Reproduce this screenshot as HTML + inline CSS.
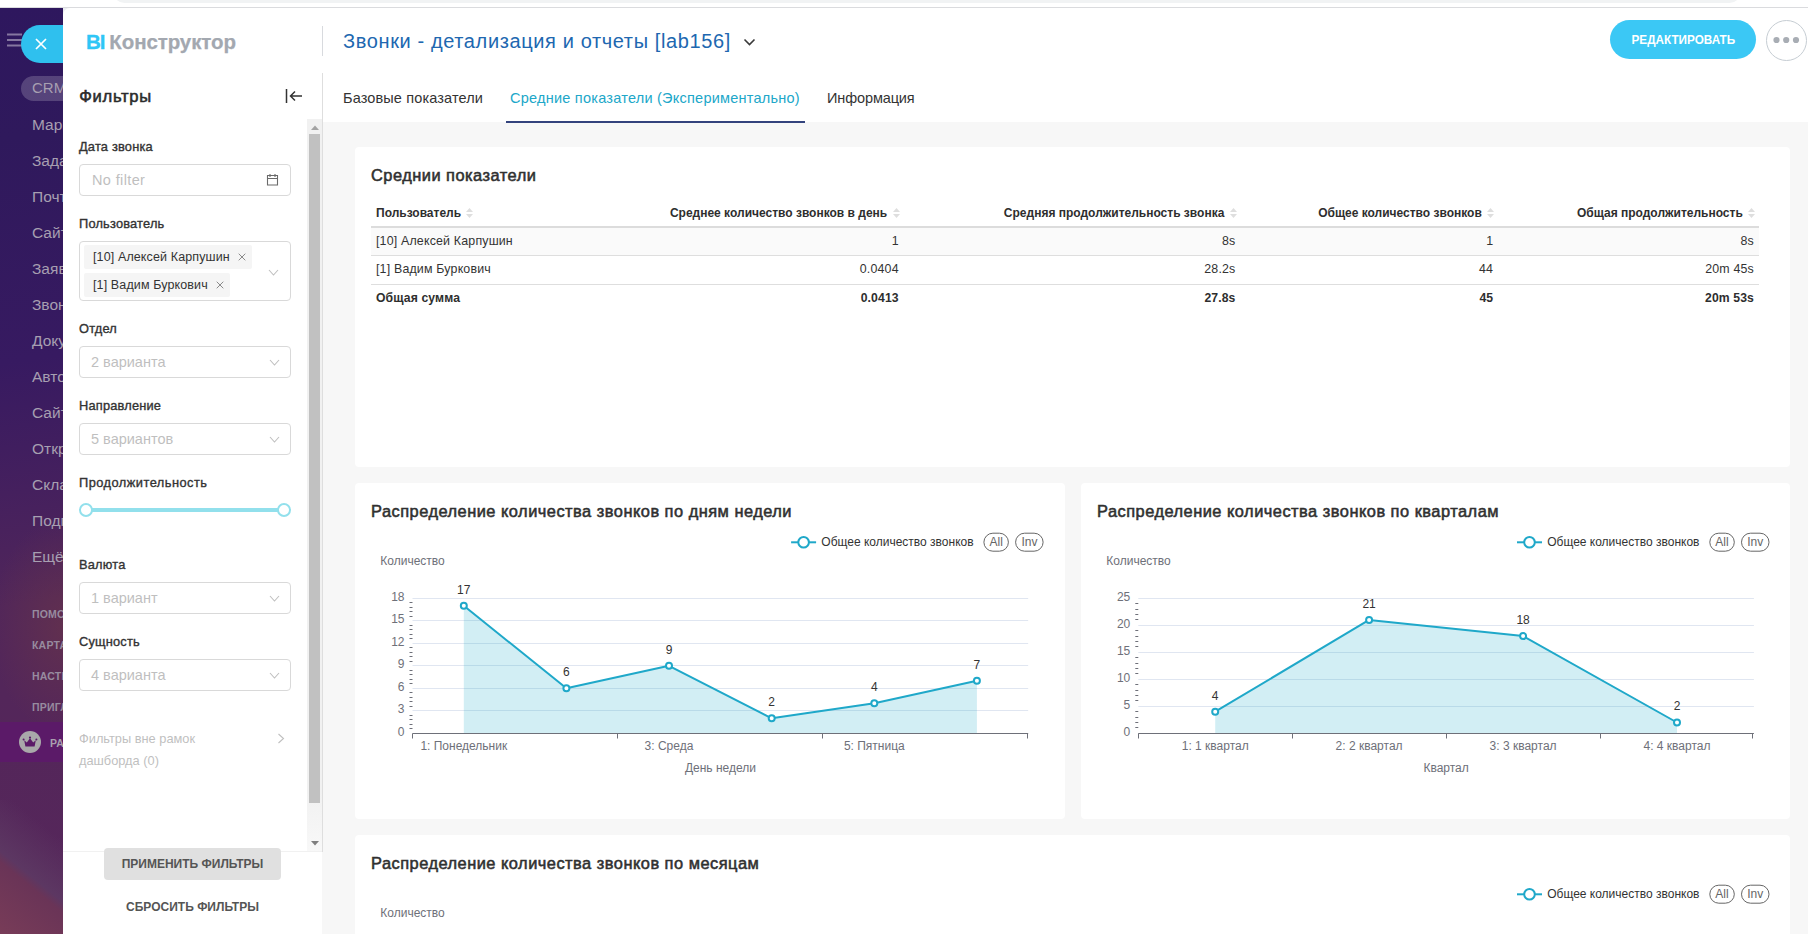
<!DOCTYPE html>
<html lang="ru">
<head>
<meta charset="utf-8">
<title>BI Конструктор</title>
<style>
*{box-sizing:border-box;margin:0;padding:0}
html,body{width:1808px;height:934px;overflow:hidden;background:#fff}
body{font-family:"Liberation Sans","DejaVu Sans",sans-serif;color:#333;position:relative}
.abs{position:absolute}
/* ---------- browser strip ---------- */
#strip{position:absolute;left:0;top:0;width:1808px;height:8px;background:#fff;border-bottom:1px solid #dadbde}
#strip i{position:absolute;left:113px;top:-20px;width:1628px;height:23px;border-radius:12px;background:#f1f3f4}
/* ---------- left bitrix sidebar ---------- */
#side{position:absolute;left:0;top:8px;width:63px;height:926px;overflow:hidden;
 background:radial-gradient(ellipse 75px 110px at 66px 618px,rgba(110,56,70,.55),rgba(110,56,70,0) 100%),linear-gradient(172deg,#2e175e 0%,#2f195c 14%,#371a61 38%,#45205e 52%,#51265a 64%,#54265a 78%,#56275b 100%)}
#side .mi{position:absolute;left:32px;white-space:nowrap;font-size:15.5px;color:#a79fb1;line-height:20px}
#side .sm{position:absolute;left:32px;white-space:nowrap;font-size:10.5px;font-weight:bold;color:#978b9f;line-height:14px;letter-spacing:.2px}
/* ---------- filter panel ---------- */
#fp{position:absolute;left:63px;top:8px;width:259px;height:926px;background:#fff;border-top-left-radius:7px}
.flabel{position:absolute;left:79px;font-size:12.8px;font-weight:normal;-webkit-text-stroke:.36px #333;letter-spacing:.2px;color:#333;line-height:16px;white-space:nowrap}
.fsel{position:absolute;left:79px;width:212px;height:32px;border:1px solid #d9d9d9;border-radius:4px;background:#fff}
.fsel span{position:absolute;left:11px;top:0;line-height:30px;font-size:14.5px;color:#bfbfbf;white-space:nowrap}
.fsel svg{position:absolute;right:10px;top:10px}
/* ---------- main ---------- */
#main{position:absolute;left:323px;top:122px;width:1485px;height:812px;background:#f7f7f7}
.card{position:absolute;background:#fff;border-radius:4px}
.ctitle{position:absolute;left:16px;letter-spacing:.49px;font-size:16.4px;font-weight:normal;-webkit-text-stroke:.55px #303030;color:#303030;white-space:nowrap;line-height:20px}
.th{font-size:12px;font-weight:bold;color:#2e2e2e;line-height:16px;white-space:nowrap}
.td{font-size:12.4px;letter-spacing:.18px;color:#333;line-height:16px;white-space:nowrap}
.td.b,.td.r.b{font-weight:bold;color:#2e2e2e;font-size:12.2px;letter-spacing:.12px}
</style>
</head>
<body>
<div id="strip"><i></i></div>

<!-- SIDEBAR -->
<div id="side">
<svg class="abs" style="left:6px;top:25px" width="16" height="14" viewBox="0 0 16 14"><path d="M1 1.5h15M1 7h15M1 12.5h15" stroke="#8577a0" stroke-width="1.9" fill="none"/></svg>
<div class="abs" style="left:21px;top:17px;width:60px;height:38px;border-radius:19px;background:#2fc0ee"></div>
<svg class="abs" style="left:35px;top:30px" width="12" height="12" viewBox="0 0 12 12"><path d="M1 1l10 10M11 1L1 11" stroke="#fff" stroke-width="1.7" fill="none"/></svg>
<div class="abs" style="left:21px;top:68px;width:60px;height:25px;border-radius:13px;background:rgba(255,255,255,.19)"></div>
<div class="mi" style="top:70px;color:#a79fb1;font-size:15px">CRM</div>
<div class="mi" style="top:107px">Маркетинг</div>
<div class="mi" style="top:143px">Задачи</div>
<div class="mi" style="top:179px">Почта</div>
<div class="mi" style="top:215px">Сайты</div>
<div class="mi" style="top:251px">Заявки</div>
<div class="mi" style="top:287px">Звонки</div>
<div class="mi" style="top:323px">Документы</div>
<div class="mi" style="top:359px">Автоматизация</div>
<div class="mi" style="top:395px">Сайты</div>
<div class="mi" style="top:431px">Открытые линии</div>
<div class="mi" style="top:467px">Склад</div>
<div class="mi" style="top:503px">Подпись</div>
<div class="mi" style="top:539px">Ещё</div>
<div class="sm" style="top:599px">ПОМОЩЬ</div>
<div class="sm" style="top:630px">КАРТА САЙТА</div>
<div class="sm" style="top:661px">НАСТРОЙКИ</div>
<div class="sm" style="top:692px">ПРИГЛАСИТЬ</div>
<div class="abs" style="left:0;top:792px;width:63px;height:134px;background:linear-gradient(219deg,rgba(90,53,96,0) 22%,rgba(93,57,99,.9) 55%,#6a3457 61%,#783c58 100%)"></div>
<div class="abs" style="left:0;top:714px;width:63px;height:40px;background:#5b1a68"></div>
<svg class="abs" style="left:19px;top:723px" width="22" height="22" viewBox="0 0 22 22"><circle cx="11" cy="11" r="11" fill="#a9a8aa"/><path d="M5.2 9.2l2.6 2.3L11 7.2l3.2 4.3 2.6-2.3-1.2 6.4H6.4z" fill="#5b1a68"/><circle cx="11" cy="6.6" r="1.1" fill="#5b1a68"/><circle cx="4.6" cy="8.6" r="1" fill="#5b1a68"/><circle cx="17.4" cy="8.6" r="1" fill="#5b1a68"/></svg>
<div class="sm" style="top:728px;left:50px;color:#a99fae">РАСШИРИТЬ ТАРИФ</div>
</div>

<!-- FILTER PANEL -->
<div class="abs" style="left:63px;top:8px;width:8px;height:8px;background:#eceef1"></div>
<div id="fp">
<div class="abs" id="logo" style="left:23px;top:21px;font-size:20.5px;font-weight:bold;line-height:26px;white-space:nowrap;letter-spacing:-1.1px;-webkit-text-stroke:.3px #2fc6f6;color:#2fc6f6">BI</div><div class="abs" id="logo2" style="left:46.300px;top:21px;font-size:20.5px;font-weight:bold;line-height:26px;white-space:nowrap;letter-spacing:-.09px;-webkit-text-stroke:.25px #a3a8b0;color:#a3a8b0">Конструктор</div>
<div class="abs" id="ftitle" style="left:16.300px;top:79px;font-size:16.6px;font-weight:normal;-webkit-text-stroke:.55px #2b2b2b;letter-spacing:.7px;line-height:20px;color:#2b2b2b">Фильтры</div>
<svg class="abs" style="left:221.800px;top:80px" width="18" height="16" viewBox="0 0 18 16"><path d="M1.5 1v14M17 8H5.5M10 3.5L5.5 8l4.500 4.500" stroke="#333" stroke-width="1.5" fill="none"/></svg>
<div class="abs" style="left:244px;top:111px;width:15px;height:732px;background:linear-gradient(180deg,#f1f1f1 0,#f1f1f1 92%,#f8f8f8 100%)"></div>
<div class="abs" style="left:246px;top:126px;width:11px;height:669px;background:#c1c1c1"></div>
<svg class="abs" style="left:247.700px;top:116.500px" width="8" height="5" viewBox="0 0 8 5"><path d="M0 5l4-4.500L8 5z" fill="#a3a3a3"/></svg>
<svg class="abs" style="left:247.700px;top:832.700px" width="8" height="5" viewBox="0 0 8 5"><path d="M0 0l4 4.500L8 0z" fill="#7f7f7f"/></svg>
<div class="abs" style="left:0;top:843px;width:259px;height:1px;background:#f1f1f1"></div>
<div class="flabel" style="left:16px;top:131px">Дата звонка</div>
<div class="fsel" style="left:16px;top:156px"><span style="left:12px;letter-spacing:.37px">No filter</span><svg style="right:11.500px;top:8.300px" width="13" height="13" viewBox="0 0 13 13"><path d="M1.500 2.500h10v9.500h-10zM1.500 5.500h10M4 1v3M9 1v3" stroke="#6a6a6a" stroke-width="1.1" fill="none"/></svg></div>
<div class="flabel" style="left:16px;top:208px">Пользователь</div>
<div class="fsel" style="left:16px;top:233px;height:60px"><svg style="right:11px;top:25px" width="11" height="11" viewBox="0 0 11 11"><path d="M1 3l4.500 5L10 3" stroke="#bfbfbf" stroke-width="1.1" fill="none"/></svg></div>
<div class="abs tag" style="left:21px;top:237px;width:168px;height:24px;background:#f5f5f5;border-radius:2px;font-size:12.5px;letter-spacing:.12px;line-height:24px;padding-left:9px;color:#333;white-space:nowrap"><span>[10] Алексей Карпушин</span><svg width="8" height="8" viewBox="0 0 8 8" style="position:absolute;right:6px;top:8px"><path d="M.7.7l6.600 6.600M7.300.7L.7 7.300" stroke="#8a8a8a" stroke-width="1" fill="none"/></svg></div>
<div class="abs tag" style="left:21px;top:265px;width:146px;height:24px;background:#f5f5f5;border-radius:2px;font-size:12.5px;letter-spacing:.12px;line-height:24px;padding-left:9px;color:#333;white-space:nowrap"><span>[1] Вадим Буркович</span><svg width="8" height="8" viewBox="0 0 8 8" style="position:absolute;right:6px;top:8px"><path d="M.7.7l6.600 6.600M7.300.7L.7 7.300" stroke="#8a8a8a" stroke-width="1" fill="none"/></svg></div>
<div class="flabel" style="left:16px;top:313px">Отдел</div>
<div class="fsel" style="left:16px;top:338px"><span>2 варианта</span><svg width="11" height="11" viewBox="0 0 11 11"><path d="M1 3l4.5 5L10 3" stroke="#bfbfbf" stroke-width="1.1" fill="none"/></svg></div>
<div class="flabel" style="left:16px;top:390px">Направление</div>
<div class="fsel" style="left:16px;top:415px"><span>5 вариантов</span><svg width="11" height="11" viewBox="0 0 11 11"><path d="M1 3l4.5 5L10 3" stroke="#bfbfbf" stroke-width="1.1" fill="none"/></svg></div>
<div class="flabel" style="left:16px;top:467px;letter-spacing:.48px">Продолжительность</div>
<div class="abs" style="left:23px;top:500px;width:198px;height:4px;background:#92e0ec;border-radius:2px"></div>
<div class="abs" style="left:16px;top:495px;width:14px;height:14px;border:2px solid #92e0ec;border-radius:7px;background:#fff"></div>
<div class="abs" style="left:214px;top:495px;width:14px;height:14px;border:2px solid #92e0ec;border-radius:7px;background:#fff"></div>
<div class="flabel" style="left:16px;top:549px">Валюта</div>
<div class="fsel" style="left:16px;top:574px"><span>1 вариант</span><svg width="11" height="11" viewBox="0 0 11 11"><path d="M1 3l4.5 5L10 3" stroke="#bfbfbf" stroke-width="1.1" fill="none"/></svg></div>
<div class="flabel" style="left:16px;top:626px">Сущность</div>
<div class="fsel" style="left:16px;top:651px"><span>4 варианта</span><svg width="11" height="11" viewBox="0 0 11 11"><path d="M1 3l4.5 5L10 3" stroke="#bfbfbf" stroke-width="1.1" fill="none"/></svg></div>
<div class="abs" id="oos" style="left:16px;top:720px;font-size:12.8px;line-height:22px;color:#bfbfbf;white-space:nowrap">Фильтры вне рамок<br>дашборда (0)</div>
<svg class="abs" style="left:214px;top:725px" width="8" height="11" viewBox="0 0 8 11"><path d="M1.500 1l5 4.500-5 4.500" stroke="#bfbfbf" stroke-width="1.1" fill="none"/></svg>
<div class="abs" id="apply" style="left:41px;top:840px;width:177px;height:32px;background:#e0e0e0;border-radius:4px;font-size:12px;font-weight:bold;color:#555;text-align:center;line-height:32px;white-space:nowrap">ПРИМЕНИТЬ ФИЛЬТРЫ</div>
<div class="abs" id="reset" style="left:41px;top:882.600px;width:177px;font-size:12px;font-weight:bold;color:#555;text-align:center;line-height:32px;white-space:nowrap">СБРОСИТЬ ФИЛЬТРЫ</div>
</div>

<!-- HEADER -->
<div class="abs" style="left:322px;top:26px;width:1px;height:30px;background:#d8dade"></div>
<div class="abs" style="left:322px;top:73px;width:1px;height:779px;background:#dedede;z-index:2"></div>
<div class="abs" id="htitle" style="left:343px;top:27px;font-size:20px;line-height:28px;color:#2067b0;white-space:nowrap;letter-spacing:.62px">Звонки - детализация и отчеты [lab156]</div>
<svg class="abs" style="left:743px;top:38px" width="13" height="9" viewBox="0 0 13 9"><path d="M1.500 1.500l5 5 5-5" stroke="#3a3a3a" stroke-width="1.6" fill="none"/></svg>
<div class="abs" id="edit" style="left:1610px;top:20px;width:146px;height:39px;border-radius:20px;background:#3bc8f5;color:#fff;font-size:12.3px;font-weight:bold;text-align:center;line-height:40px;white-space:nowrap"><span style="display:inline-block;transform:scaleX(.953)">РЕДАКТИРОВАТЬ</span></div>
<div class="abs" style="left:1766px;top:20px;width:41px;height:41px;border-radius:21px;border:1px solid #c6cdd3;background:#fff"></div>
<svg class="abs" style="left:1771.800px;top:36px" width="28" height="8" viewBox="0 0 28 8"><circle cx="4.500" cy="4" r="3.100" fill="#a8adb4"/><circle cx="14.200" cy="4" r="3.100" fill="#a8adb4"/><circle cx="24" cy="4" r="3.100" fill="#a8adb4"/></svg>
<div class="abs tab" style="left:343px;top:88px;font-size:14.5px;line-height:20px;color:#333;white-space:nowrap;letter-spacing:.13px">Базовые показатели</div>
<div class="abs tab" style="left:510px;top:88px;font-size:14.5px;line-height:20px;color:#20a7c9;white-space:nowrap;letter-spacing:.24px">Средние показатели (Экспериментально)</div>
<div class="abs tab" style="left:827px;top:88px;font-size:14.5px;line-height:20px;color:#333;white-space:nowrap;letter-spacing:-.12px">Информация</div>
<div class="abs" style="left:506px;top:121px;width:299px;height:2px;background:#33437d;z-index:3"></div>

<div class="abs" style="left:322px;top:852px;width:1px;height:82px;background:#f7f7f7"></div>
<!-- MAIN -->
<div id="main">
<div class="card" style="left:32px;top:25px;width:1435px;height:320px">
<div class="ctitle" id="t1" style="top:18px">Среднии показатели</div>
<div class="abs th" style="left:21px;top:58px">Пользователь</div>
<svg class="abs" style="left:110.5px;top:61px" width="7" height="10" viewBox="0 0 7 10"><path d="M0 4l3.500-4L7 4zM0 6l3.500 4L7 6z" fill="#dedede"/></svg>
<div class="abs th r" style="right:902.8px;top:58px">Среднее количество звонков в день</div>
<svg class="abs" style="left:537.5px;top:61px" width="7" height="10" viewBox="0 0 7 10"><path d="M0 4l3.500-4L7 4zM0 6l3.500 4L7 6z" fill="#dedede"/></svg>
<div class="abs th r" style="right:565.7px;top:58px">Средняя продолжительность звонка</div>
<svg class="abs" style="left:874.6px;top:61px" width="7" height="10" viewBox="0 0 7 10"><path d="M0 4l3.500-4L7 4zM0 6l3.500 4L7 6z" fill="#dedede"/></svg>
<div class="abs th r" style="right:308.2px;top:58px">Общее количество звонков</div>
<svg class="abs" style="left:1132.1px;top:61px" width="7" height="10" viewBox="0 0 7 10"><path d="M0 4l3.500-4L7 4zM0 6l3.500 4L7 6z" fill="#dedede"/></svg>
<div class="abs th r" style="right:47.2px;top:58px">Общая продолжительность</div>
<svg class="abs" style="left:1393.1px;top:61px" width="7" height="10" viewBox="0 0 7 10"><path d="M0 4l3.500-4L7 4zM0 6l3.500 4L7 6z" fill="#dedede"/></svg>
<div class="abs" style="left:16px;top:79px;width:1388px;height:2px;background:#dcdcdc"></div>
<div class="abs" style="left:16px;top:81px;width:1388px;height:27px;background:#fafafa"></div>
<div class="abs" style="left:16px;top:108px;width:1388px;height:1px;background:#dedede"></div>
<div class="abs" style="left:16px;top:137px;width:1388px;height:1px;background:#dedede"></div>
<div class="abs td" style="left:21px;top:85.5px">[10] Алексей Карпушин</div>
<div class="abs td r" style="right:891.3px;top:85.5px">1</div>
<div class="abs td r" style="right:554.5px;top:85.5px">8s</div>
<div class="abs td r" style="right:296.8px;top:85.5px">1</div>
<div class="abs td r" style="right:36.0px;top:85.5px">8s</div>
<div class="abs td" style="left:21px;top:113.6px">[1] Вадим Буркович</div>
<div class="abs td r" style="right:891.3px;top:113.6px">0.0404</div>
<div class="abs td r" style="right:554.5px;top:113.6px">28.2s</div>
<div class="abs td r" style="right:296.8px;top:113.6px">44</div>
<div class="abs td r" style="right:36.0px;top:113.6px">20m 45s</div>
<div class="abs td b" style="left:21px;top:142.6px">Общая сумма</div>
<div class="abs td r b" style="right:891.3px;top:142.6px">0.0413</div>
<div class="abs td r b" style="right:554.5px;top:142.6px">27.8s</div>
<div class="abs td r b" style="right:296.8px;top:142.6px">45</div>
<div class="abs td r b" style="right:36.0px;top:142.6px">20m 53s</div>
</div>
<!--CHARTS-START-->
<div class="card" style="left:32px;top:361px;width:710px;height:336px">
<div class="ctitle" id="t2" style="top:18px">Распределение количества звонков по дням недели</div>
<svg class="abs" style="left:0;top:0" width="710" height="336" viewBox="0 0 710 336" font-family="Liberation Sans, Arial, sans-serif">
<path d="M436.1 59.3h25" stroke="#1fa8c9" stroke-width="2" fill="none"/>
<circle cx="448.6" cy="59.3" r="5.3" fill="#fff" stroke="#1fa8c9" stroke-width="2"/>
<text x="466.3" y="63.2" font-size="12" fill="#333">Общее количество звонков</text>
<rect x="628.9" y="50.2" width="24.5" height="18" rx="9" fill="#fff" stroke="#666" stroke-width="1"/>
<text x="641.2" y="63.2" font-size="12" fill="#666" text-anchor="middle">All</text>
<rect x="660.6" y="50.2" width="27.5" height="18" rx="9" fill="#fff" stroke="#666" stroke-width="1"/>
<text x="674.4" y="63.2" font-size="12" fill="#666" text-anchor="middle">Inv</text>
<text x="25.3" y="82.2" font-size="12" fill="#6e7079">Количество</text>
<text x="49.5" y="252.9" font-size="12" fill="#6e7079" text-anchor="end">0</text>
<path d="M57.5 227.5H673.2" stroke="#e0e6f1" stroke-width="1"/>
<text x="49.5" y="230.4" font-size="12" fill="#6e7079" text-anchor="end">3</text>
<path d="M57.5 205.5H673.2" stroke="#e0e6f1" stroke-width="1"/>
<text x="49.5" y="207.9" font-size="12" fill="#6e7079" text-anchor="end">6</text>
<path d="M57.5 182.5H673.2" stroke="#e0e6f1" stroke-width="1"/>
<text x="49.5" y="185.4" font-size="12" fill="#6e7079" text-anchor="end">9</text>
<path d="M57.5 160.5H673.2" stroke="#e0e6f1" stroke-width="1"/>
<text x="49.5" y="162.9" font-size="12" fill="#6e7079" text-anchor="end">12</text>
<path d="M57.5 137.5H673.2" stroke="#e0e6f1" stroke-width="1"/>
<text x="49.5" y="140.4" font-size="12" fill="#6e7079" text-anchor="end">15</text>
<path d="M57.5 115.5H673.2" stroke="#e0e6f1" stroke-width="1"/>
<text x="49.5" y="117.9" font-size="12" fill="#6e7079" text-anchor="end">18</text>
<path d="M57.5 245.5h-3M57.5 241.5h-3M57.5 236.5h-3M57.5 232.5h-3M57.5 223.5h-3M57.5 218.5h-3M57.5 214.5h-3M57.5 209.5h-3M57.5 200.5h-3M57.5 196.5h-3M57.5 191.5h-3M57.5 187.5h-3M57.5 178.5h-3M57.5 173.5h-3M57.5 169.5h-3M57.5 164.5h-3M57.5 155.5h-3M57.5 151.5h-3M57.5 146.5h-3M57.5 142.5h-3M57.5 133.5h-3M57.5 128.5h-3M57.5 124.5h-3M57.5 119.5h-3" stroke="#6e7079" stroke-width="1"/>
<path d="M108.8 122.8 L211.4 205.3 L314.0 182.8 L416.7 235.3 L519.3 220.3 L621.9 197.8 L621.9 250.3 L108.8 250.3 Z" fill="#1fa8c9" fill-opacity=".2"/>
<path d="M108.8 122.8 L211.4 205.3 L314.0 182.8 L416.7 235.3 L519.3 220.3 L621.9 197.8" fill="none" stroke="#1fa8c9" stroke-width="2" stroke-linejoin="bevel"/>
<path d="M57.5 250.5H673.2" stroke="#6e7079" stroke-width="1"/>
<path d="M57.5 250.5v5M262.5 250.5v5M467.5 250.5v5M672.5 250.5v5" stroke="#6e7079" stroke-width="1"/>
<circle cx="108.8" cy="122.8" r="3" fill="#fff" stroke="#1fa8c9" stroke-width="2"/>
<text x="108.8" y="111" font-size="12" fill="#333" text-anchor="middle">17</text>
<circle cx="211.4" cy="205.3" r="3" fill="#fff" stroke="#1fa8c9" stroke-width="2"/>
<text x="211.4" y="193" font-size="12" fill="#333" text-anchor="middle">6</text>
<circle cx="314.0" cy="182.8" r="3" fill="#fff" stroke="#1fa8c9" stroke-width="2"/>
<text x="314.0" y="171" font-size="12" fill="#333" text-anchor="middle">9</text>
<circle cx="416.7" cy="235.3" r="3" fill="#fff" stroke="#1fa8c9" stroke-width="2"/>
<text x="416.7" y="223" font-size="12" fill="#333" text-anchor="middle">2</text>
<circle cx="519.3" cy="220.3" r="3" fill="#fff" stroke="#1fa8c9" stroke-width="2"/>
<text x="519.3" y="208" font-size="12" fill="#333" text-anchor="middle">4</text>
<circle cx="621.9" cy="197.8" r="3" fill="#fff" stroke="#1fa8c9" stroke-width="2"/>
<text x="621.9" y="186" font-size="12" fill="#333" text-anchor="middle">7</text>
<text x="108.8" y="266.9" font-size="12" fill="#6e7079" text-anchor="middle">1: Понедельник</text>
<text x="314.0" y="266.9" font-size="12" fill="#6e7079" text-anchor="middle">3: Среда</text>
<text x="519.3" y="266.9" font-size="12" fill="#6e7079" text-anchor="middle">5: Пятница</text>
<text x="365.4" y="288.9" font-size="12" fill="#6e7079" text-anchor="middle">День недели</text>
</svg></div>
<div class="card" style="left:758px;top:361px;width:709px;height:336px">
<div class="ctitle" id="t3" style="top:18px">Распределение количества звонков по кварталам</div>
<svg class="abs" style="left:0;top:0" width="709" height="336" viewBox="0 0 709 336" font-family="Liberation Sans, Arial, sans-serif">
<path d="M436.0 59.3h25" stroke="#1fa8c9" stroke-width="2" fill="none"/>
<circle cx="448.5" cy="59.3" r="5.3" fill="#fff" stroke="#1fa8c9" stroke-width="2"/>
<text x="466.2" y="63.2" font-size="12" fill="#333">Общее количество звонков</text>
<rect x="628.8" y="50.2" width="24.5" height="18" rx="9" fill="#fff" stroke="#666" stroke-width="1"/>
<text x="641.0" y="63.2" font-size="12" fill="#666" text-anchor="middle">All</text>
<rect x="660.5" y="50.2" width="27.5" height="18" rx="9" fill="#fff" stroke="#666" stroke-width="1"/>
<text x="674.2" y="63.2" font-size="12" fill="#666" text-anchor="middle">Inv</text>
<text x="25.3" y="82.2" font-size="12" fill="#6e7079">Количество</text>
<text x="49.3" y="252.9" font-size="12" fill="#6e7079" text-anchor="end">0</text>
<path d="M57.3 223.5H672.9" stroke="#e0e6f1" stroke-width="1"/>
<text x="49.3" y="225.9" font-size="12" fill="#6e7079" text-anchor="end">5</text>
<path d="M57.3 196.5H672.9" stroke="#e0e6f1" stroke-width="1"/>
<text x="49.3" y="198.9" font-size="12" fill="#6e7079" text-anchor="end">10</text>
<path d="M57.3 169.5H672.9" stroke="#e0e6f1" stroke-width="1"/>
<text x="49.3" y="171.9" font-size="12" fill="#6e7079" text-anchor="end">15</text>
<path d="M57.3 142.5H672.9" stroke="#e0e6f1" stroke-width="1"/>
<text x="49.3" y="144.9" font-size="12" fill="#6e7079" text-anchor="end">20</text>
<path d="M57.3 115.5H672.9" stroke="#e0e6f1" stroke-width="1"/>
<text x="49.3" y="117.9" font-size="12" fill="#6e7079" text-anchor="end">25</text>
<path d="M57.3 244.5h-3M57.3 239.5h-3M57.3 234.5h-3M57.3 228.5h-3M57.3 217.5h-3M57.3 212.5h-3M57.3 207.5h-3M57.3 201.5h-3M57.3 190.5h-3M57.3 185.5h-3M57.3 180.5h-3M57.3 174.5h-3M57.3 163.5h-3M57.3 158.5h-3M57.3 153.5h-3M57.3 147.5h-3M57.3 136.5h-3M57.3 131.5h-3M57.3 126.5h-3M57.3 120.5h-3" stroke="#6e7079" stroke-width="1"/>
<path d="M134.2 228.7 L288.1 136.9 L442.1 153.1 L596.0 239.5 L596.0 250.3 L134.2 250.3 Z" fill="#1fa8c9" fill-opacity=".2"/>
<path d="M134.2 228.7 L288.1 136.9 L442.1 153.1 L596.0 239.5" fill="none" stroke="#1fa8c9" stroke-width="2" stroke-linejoin="bevel"/>
<path d="M57.3 250.5H672.9" stroke="#6e7079" stroke-width="1"/>
<path d="M57.5 250.5v5M211.5 250.5v5M365.5 250.5v5M519.5 250.5v5M671.5 250.5v5" stroke="#6e7079" stroke-width="1"/>
<circle cx="134.2" cy="228.7" r="3" fill="#fff" stroke="#1fa8c9" stroke-width="2"/>
<text x="134.2" y="217" font-size="12" fill="#333" text-anchor="middle">4</text>
<circle cx="288.1" cy="136.9" r="3" fill="#fff" stroke="#1fa8c9" stroke-width="2"/>
<text x="288.1" y="125" font-size="12" fill="#333" text-anchor="middle">21</text>
<circle cx="442.1" cy="153.1" r="3" fill="#fff" stroke="#1fa8c9" stroke-width="2"/>
<text x="442.1" y="141" font-size="12" fill="#333" text-anchor="middle">18</text>
<circle cx="596.0" cy="239.5" r="3" fill="#fff" stroke="#1fa8c9" stroke-width="2"/>
<text x="596.0" y="227" font-size="12" fill="#333" text-anchor="middle">2</text>
<text x="134.2" y="266.9" font-size="12" fill="#6e7079" text-anchor="middle">1: 1 квартал</text>
<text x="288.1" y="266.9" font-size="12" fill="#6e7079" text-anchor="middle">2: 2 квартал</text>
<text x="442.1" y="266.9" font-size="12" fill="#6e7079" text-anchor="middle">3: 3 квартал</text>
<text x="596.0" y="266.9" font-size="12" fill="#6e7079" text-anchor="middle">4: 4 квартал</text>
<text x="365.1" y="288.9" font-size="12" fill="#6e7079" text-anchor="middle">Квартал</text>
</svg></div>
<div class="card" style="left:32px;top:713px;width:1435px;height:336px">
<div class="ctitle" id="t4" style="top:18px">Распределение количества звонков по месяцам</div>
<svg class="abs" style="left:0;top:0" width="1435" height="336" viewBox="0 0 1435 336" font-family="Liberation Sans, Arial, sans-serif">
<path d="M1162.0 59.3h25" stroke="#1fa8c9" stroke-width="2" fill="none"/>
<circle cx="1174.5" cy="59.3" r="5.3" fill="#fff" stroke="#1fa8c9" stroke-width="2"/>
<text x="1192.2" y="63.2" font-size="12" fill="#333">Общее количество звонков</text>
<rect x="1354.8" y="50.2" width="24.5" height="18" rx="9" fill="#fff" stroke="#666" stroke-width="1"/>
<text x="1367.0" y="63.2" font-size="12" fill="#666" text-anchor="middle">All</text>
<rect x="1386.5" y="50.2" width="27.5" height="18" rx="9" fill="#fff" stroke="#666" stroke-width="1"/>
<text x="1400.2" y="63.2" font-size="12" fill="#666" text-anchor="middle">Inv</text>
<text x="25.3" y="82.2" font-size="12" fill="#6e7079">Количество</text>
</svg></div>
<!--CHARTS-END-->
</div>

</body>
</html>
